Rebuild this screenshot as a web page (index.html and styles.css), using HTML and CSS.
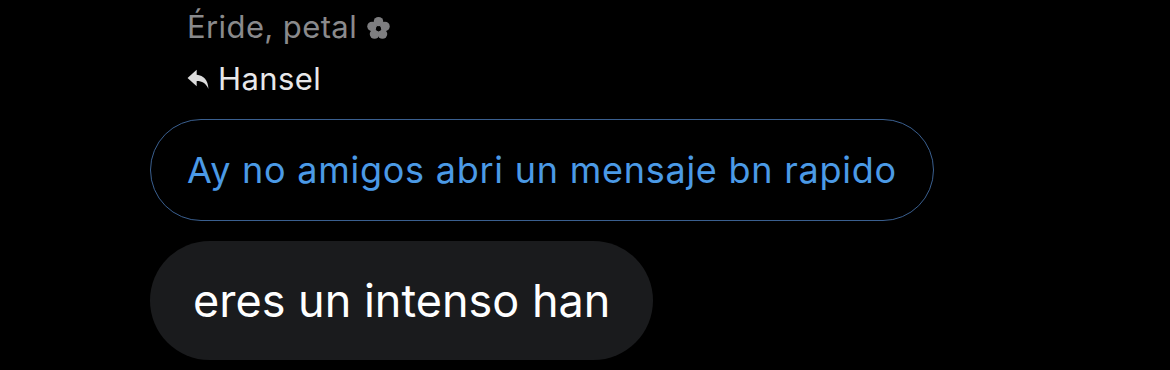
FILE: index.html
```html
<!DOCTYPE html>
<html lang="es">
<head>
  <meta charset="UTF-8" />
  <title>Mensajes</title>
  <link rel="stylesheet" href="styles.css">
</head>
<body>
  <main class="thread">
    <div class="meta">
      <div class="sender">
        <span>Éride, petal</span>
        <svg class="flower" viewBox="0 0 24 24" width="25" height="25">
          <circle cx="12" cy="5.5" r="4.6"/>
          <circle cx="18.2" cy="10" r="4.6"/>
          <circle cx="15.8" cy="17.3" r="4.6"/>
          <circle cx="8.2" cy="17.3" r="4.6"/>
          <circle cx="5.8" cy="10" r="4.6"/>
          <circle class="flower-hole" cx="12" cy="12.2" r="2.4"/>
        </svg>
      </div>
      <div class="reply-to">
        <svg class="reply-icon" viewBox="0 0 20 20" width="22" height="22">
          <path d="M8.8 1.5 L0.5 9 L8.8 16.5 L8.8 11.8 C13.8 11.8 17 13.5 19.5 19 C19.2 11 15.2 6.6 8.8 6.1 Z" fill="currentColor"/>
        </svg>
        <span>Hansel</span>
      </div>
    </div>

    <div class="bubble quoted">Ay no amigos abri un mensaje bn rapido</div>
    <div class="bubble message">eres un intenso han</div>
  </main>
</body>
</html>
```
FILE: styles.css
```css
/* Fondo negro */
body {
  margin: 0;
  background: #000;
  font-family: Inter, 'Noto Sans', sans-serif;
}

.thread {
  display: flex;
  flex-direction: column;
  align-items: flex-start;
  padding: 7px 0 0 150px;
}

/* Cabecera del mensaje */
.meta {
  margin-left: 37px;
  font-size: 31px;
  line-height: 40px;
  letter-spacing: 0.4px;
}
.sender {
  display: flex;
  align-items: center;
  gap: 9px;
  color: #8a8a8c;
}
.flower {
  fill: #7e7e80;
  margin-top: 2px;
}
.flower-hole {
  fill: #000;
}
.reply-to {
  display: flex;
  align-items: center;
  gap: 9px;
  margin-top: 12px;
  color: #e8e8ea;
}
.reply-icon {
  color: #dcdcdc;
}

/* Burbujas */
.bubble {
  box-sizing: border-box;
  border-radius: 60px;
  white-space: nowrap;
  display: flex;
  align-items: center;
}
.quoted {
  margin-top: 20px;
  height: 102px;
  padding: 0 36px;
  border: 1.5px solid #3a5f8f;
  color: #4b9ae6;
  font-size: 36px;
  letter-spacing: 0.75px;
}
.message {
  margin-top: 20px;
  height: 119px;
  padding: 0 43px;
  background: #1a1b1d;
  color: #fff;
  font-size: 45px;
}
```
